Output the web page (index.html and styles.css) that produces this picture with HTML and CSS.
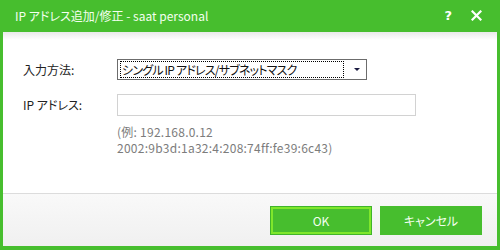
FILE: index.html
```html
<!DOCTYPE html>
<html lang="ja">
<head>
    <meta charset="UTF-8">
    <title>IP アドレス追加/修正</title>
    <link rel="stylesheet" href="styles.css">
</head>
<body>
    <div class="dialog">
        <div class="titlebar">
            <span class="title">IP アドレス追加/修正 - saat personal</span>
            <span class="help">?</span>
            <svg class="close" width="11" height="11" viewBox="0 0 11 11">
                <path d="M1.5 1.5 L9.5 9.5 M9.5 1.5 L1.5 9.5" stroke="#fff" stroke-width="2.2" stroke-linecap="square"/>
            </svg>
        </div>

        <div class="content">
            <div class="form">
                <label class="label">入力方法:</label>
                <div class="select">
                    <span class="select-text">シングル IP アドレス/サブネットマスク</span>
                    <span class="arrow"></span>
                </div>

                <label class="label">IP アドレス:</label>
                <div class="field">
                    <input type="text" class="ip-input">
                    <p class="hint">(例: 192.168.0.12<br>2002:9b3d:1a32:4:208:74ff:fe39:6c43)</p>
                </div>
            </div>
        </div>

        <div class="footer">
            <button class="btn btn-ok">OK</button>
            <button class="btn">キャンセル</button>
        </div>
    </div>
</body>
</html>
```

FILE: styles.css
```css
body {
    margin: 0;
    padding: 0;
    font-family: "Noto Sans CJK JP", sans-serif;
    font-size: 12px;
    font-feature-settings: "palt";
}
.dialog {
    width: 500px;
    height: 250px;
    box-sizing: border-box;
    background: #47be2e;
    padding: 0 3px 4px 3px;
    display: flex;
    flex-direction: column;
}
.titlebar {
    height: 32px;
    display: flex;
    align-items: center;
    padding-left: 12px;
    color: #f4fff0;
    font-size: 12px;
}
.title {
    flex: 1;
    margin-top: -1px;
}
.help {
    font-family: "DejaVu Sans", sans-serif;
    font-weight: bold;
    font-size: 13px;
    color: #fff;
    margin-right: 19px;
    margin-top: -2px;
}
.close {
    margin-right: 15px;
    margin-top: -2px;
}
.content {
    flex: 1;
    background: linear-gradient(#e9e9e9, #ffffff 8px);
    padding: 27px 0 0 20px;
}
.form {
    display: grid;
    grid-template-columns: 94px auto;
    row-gap: 13px;
    align-items: start;
    color: #222;
}
.label {
    line-height: 22px;
}
.select {
    width: 250px;
    height: 21px;
    box-sizing: border-box;
    border: 1px solid #6c6c6c;
    display: flex;
    align-items: center;
    padding: 1px 2px;
}
.select-text {
    width: 224px;
    height: 17px;
    box-sizing: border-box;
    border: 1px dotted #000;
    line-height: 15px;
    padding-left: 1px;
    color: #111;
    white-space: nowrap;
    overflow: hidden;
    letter-spacing: -0.8px;
}
.arrow {
    margin-left: 10px;
    width: 0;
    height: 0;
    border-left: 3px solid transparent;
    border-right: 3px solid transparent;
    border-top: 3px solid #1a1a40;
}
.ip-input {
    display: block;
    width: 299px;
    height: 22px;
    box-sizing: border-box;
    border: 1px solid #d2d2d2;
    margin: 0;
}
.hint {
    margin: 8px 0 0 0;
    line-height: 16px;
    color: #7c7c7c;
    letter-spacing: 0.25px;
}
.footer {
    height: 53px;
    border-top: 1px solid #dcdcdc;
    background: linear-gradient(#f9f9f9, #f0f0f0);
    display: flex;
    justify-content: flex-end;
    align-items: flex-start;
    gap: 8px;
    padding: 12px 15px 0 0;
    box-sizing: border-box;
}
.btn {
    width: 102px;
    height: 29px;
    border: none;
    background: #47be2e;
    color: #f4fff0;
    font-family: "Noto Sans CJK JP", sans-serif;
    font-size: 12px;
    font-feature-settings: "palt";
    margin: 0;
    padding: 0;
}
.btn-ok {
    border: 1px solid #3fb52b;
    box-shadow: inset 0 0 0 2px #7fe72b;
}
```
